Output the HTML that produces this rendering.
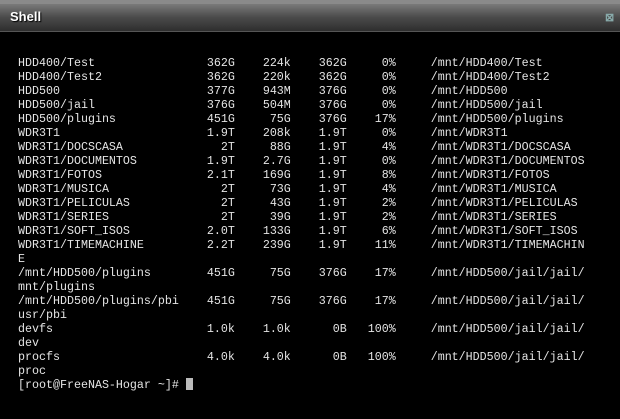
<!DOCTYPE html>
<html><head><style>
html,body{margin:0;padding:0;width:620px;height:419px;background:#000;overflow:hidden}
.top{position:absolute;left:0;top:0;width:620px;height:4px;background:#8a8a8a}
.bar{position:absolute;left:0;top:4px;width:620px;height:27px;background:linear-gradient(#7a7a7a,#4a4a4a 50%,#2e2e2e);border-bottom:1px solid #555}
.bar b{position:absolute;left:10px;top:5px;font:bold 13px "Liberation Sans",sans-serif;color:#fff;text-shadow:1px 1px 1px #000}
.x{position:absolute;left:605px;top:7px;font:bold 11px "Liberation Sans",sans-serif;color:#8aa}
pre{position:absolute;left:18px;top:56px;margin:0;font:11.67px/14px "Liberation Mono",monospace;color:#e4e4e4}
.cur{display:inline-block;width:7px;height:12px;background:#bbb;vertical-align:-2px}
</style></head><body>
<div class="top"></div>
<div class="bar"><b>Shell</b><span class="x">⊠</span></div>
<pre>HDD400/Test                362G    224k    362G     0%     /mnt/HDD400/Test
HDD400/Test2               362G    220k    362G     0%     /mnt/HDD400/Test2
HDD500                     377G    943M    376G     0%     /mnt/HDD500
HDD500/jail                376G    504M    376G     0%     /mnt/HDD500/jail
HDD500/plugins             451G     75G    376G    17%     /mnt/HDD500/plugins
WDR3T1                     1.9T    208k    1.9T     0%     /mnt/WDR3T1
WDR3T1/DOCSCASA              2T     88G    1.9T     4%     /mnt/WDR3T1/DOCSCASA
WDR3T1/DOCUMENTOS          1.9T    2.7G    1.9T     0%     /mnt/WDR3T1/DOCUMENTOS
WDR3T1/FOTOS               2.1T    169G    1.9T     8%     /mnt/WDR3T1/FOTOS
WDR3T1/MUSICA                2T     73G    1.9T     4%     /mnt/WDR3T1/MUSICA
WDR3T1/PELICULAS             2T     43G    1.9T     2%     /mnt/WDR3T1/PELICULAS
WDR3T1/SERIES                2T     39G    1.9T     2%     /mnt/WDR3T1/SERIES
WDR3T1/SOFT_ISOS           2.0T    133G    1.9T     6%     /mnt/WDR3T1/SOFT_ISOS
WDR3T1/TIMEMACHINE         2.2T    239G    1.9T    11%     /mnt/WDR3T1/TIMEMACHIN
E
/mnt/HDD500/plugins        451G     75G    376G    17%     /mnt/HDD500/jail/jail/
mnt/plugins
/mnt/HDD500/plugins/pbi    451G     75G    376G    17%     /mnt/HDD500/jail/jail/
usr/pbi
devfs                      1.0k    1.0k      0B   100%     /mnt/HDD500/jail/jail/
dev
procfs                     4.0k    4.0k      0B   100%     /mnt/HDD500/jail/jail/
proc
[root@FreeNAS-Hogar ~]# <span class="cur"></span></pre>
</body></html>
